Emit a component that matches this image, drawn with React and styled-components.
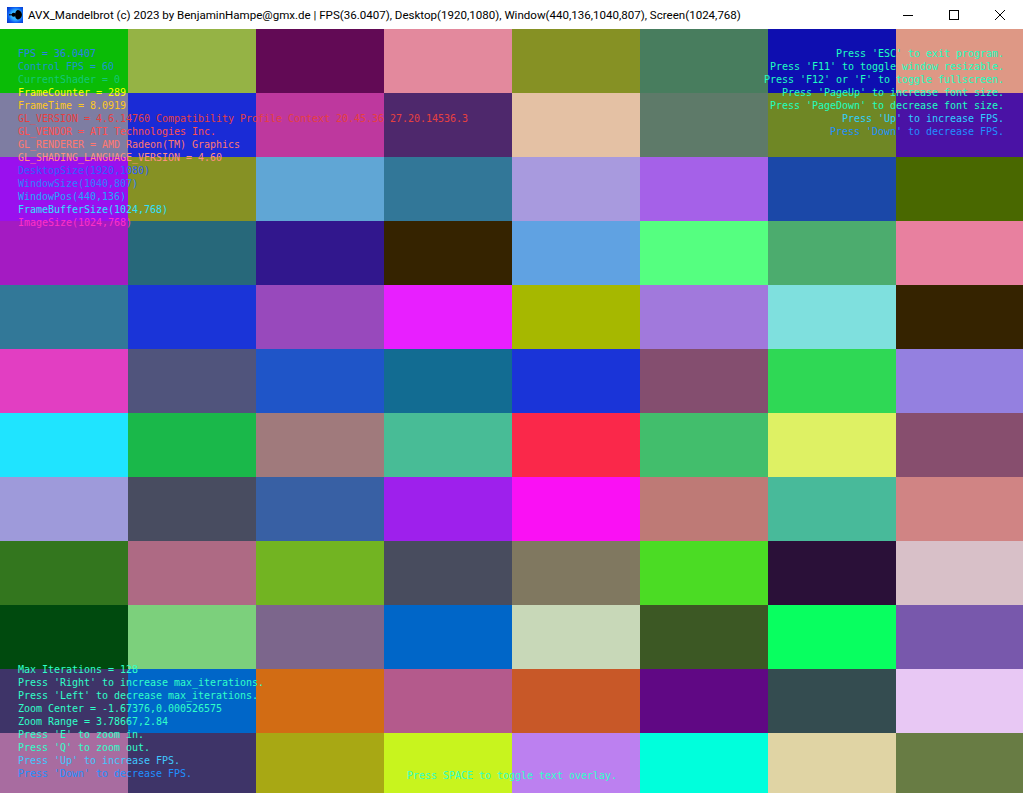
import React from 'react';
import styled, { createGlobalStyle } from 'styled-components';

const GlobalStyle = createGlobalStyle`
  html, body {
    margin: 0;
    padding: 0;
    height: 100%;
    overflow: hidden;
    background: #fff;
  }
`;

const Window = styled.div`
  display: flex;
  flex-direction: column;
  width: 1023px;
  height: 793px;
  overflow: hidden;
`;

const TitleBar = styled.header`
  display: flex;
  align-items: center;
  flex: 0 0 29px;
  height: 29px;
  background: #fff;
  color: #000;
  font-family: Roboto, 'Noto Sans', sans-serif;
  font-size: 11.55px;
  white-space: nowrap;
`;

const AppIcon = styled.svg`
  flex: none;
  width: 16px;
  height: 16px;
  margin: 0 5px 0 7px;
`;

const Title = styled.span`
  flex: 1;
`;

const CaptionButton = styled.div`
  display: flex;
  align-items: center;
  justify-content: center;
  width: 46px;
  height: 29px;

  svg {
    display: block;
    width: 10px;
    height: 10px;
  }
`;

const Canvas = styled.main`
  position: relative;
  flex: none;
  width: 1024px;
  height: 768px;
  font-family: 'DejaVu Sans Mono', 'Liberation Mono', monospace;
  font-size: 10px;
  letter-spacing: -0.02px;
  line-height: 13px;
  white-space: pre;
`;

const TileGrid = styled.div`
  display: grid;
  grid-template-columns: repeat(8, 128px);
  grid-auto-rows: 64px;
`;

const Tile = styled.div`
  background: ${(p) => p.$color};
`;

const Overlay = styled.div`
  position: absolute;
  display: flex;
  flex-direction: column;
  ${(p) => p.$top && 'top: 18px;'}
  ${(p) => p.$bottom && `bottom: ${p.$bottom}px;`}
  ${(p) => p.$left && 'left: 18px;'}
  ${(p) => p.$right && 'right: 20px; align-items: flex-end;'}
  ${(p) => p.$center && 'left: 0; right: 0; align-items: center;'}
`;

const Line = styled.div`
  color: ${(p) => p.$color};
`;

const TILES = [
  '#0abc06', '#95b345', '#620a55', '#e3899d', '#869124', '#487d5e', '#0e0eb0', '#de9885',
  '#7e7da2', '#1a2bd6', '#be389e', '#4e286c', '#e4c1a4', '#5e7a69', '#6f8725', '#4a12a5',
  '#9a10ee', '#869124', '#60a6d5', '#327798', '#a89ade', '#a561e8', '#1b48a8', '#496800',
  '#a41bc2', '#27687a', '#31178d', '#352300', '#60a2e2', '#55ff80', '#4cac6e', '#e8809f',
  '#327898', '#1a34d8', '#9849bc', '#e81fff', '#a6b800', '#a179dc', '#7fe0de', '#352300',
  '#e23ec2', '#50547c', '#1f55c8', '#126c92', '#1a34d8', '#844e6f', '#2fd855', '#9480e0',
  '#1fe4ff', '#1ab84a', '#a07a7c', '#48bc96', '#fa284a', '#42be6c', '#def164', '#874e6e',
  '#9e9ada', '#484c60', '#3860a4', '#9e20ec', '#fa10f4', '#be7a76', '#48ba9a', '#d08484',
  '#33761e', '#ae6a84', '#72b422', '#484c5e', '#807860', '#4bdc24', '#2a1038', '#d8c0c8',
  '#004a0e', '#7cd07c', '#7c668c', '#0066c8', '#c8d8b8', '#3c5824', '#08ff60', '#7858ac',
  '#3e3468', '#0066c8', '#d26c14', '#b45a8c', '#c85828', '#600884', '#344c50', '#e8c8f4',
  '#a86ca0', '#3e3468', '#a8a814', '#c8f41e', '#bc80f0', '#00ffdc', '#e0d4a4', '#687c44',
];

const STATS = [
  ['FPS = 36.0407', '#2a80e8'],
  ['Control FPS = 60', '#1a96d0'],
  ['CurrentShader = 0', '#10c878'],
  ['FrameCounter = 289', '#ffff00'],
  ['FrameTime = 8.0919', '#ffc81e'],
  ['GL_VERSION = 4.6.14760 Compatibility Profile Context 20.45.36 27.20.14536.3', '#e64040'],
  ['GL_VENDOR = ATI Technologies Inc.', '#ff5050'],
  ['GL_RENDERER = AMD Radeon(TM) Graphics', '#ff7870'],
  ['GL_SHADING_LANGUAGE_VERSION = 4.60', '#ff9080'],
  ['DesktopSize(1920,1080)', '#2e60ff'],
  ['WindowSize(1040,807)', '#2e80ff'],
  ['WindowPos(440,136)', '#20a8ff'],
  ['FrameBufferSize(1024,768)', '#30e0ff'],
  ['ImageSize(1024,768)', '#ff30c8'],
];

const HELP = [
  ["Press 'ESC' to exit program.", '#20ffc0'],
  ["Press 'F11' to toggle window resizable.", '#20ffc0'],
  ["Press 'F12' or 'F' to toggle fullscreen.", '#20ffc0'],
  ["Press 'PageUp' to increase font size.", '#20ffc0'],
  ["Press 'PageDown' to decrease font size.", '#20ffc0'],
  ["Press 'Up' to increase FPS.", '#30d0ff'],
  ["Press 'Down' to decrease FPS.", '#2090ff'],
];

const ZOOM_HELP = [
  ['Max Iterations = 128', '#30ffc8'],
  ["Press 'Right' to increase max_iterations.", '#30ffc8'],
  ["Press 'Left' to decrease max_iterations.", '#30ffc8'],
  ['Zoom Center = -1.67376,0.000526575', '#30ffc8'],
  ['Zoom Range = 3.78667,2.84', '#30ffc8'],
  ["Press 'E' to zoom in.", '#30ffc8'],
  ["Press 'Q' to zoom out.", '#30ffc8'],
  ["Press 'Up' to increase FPS.", '#40c8ff'],
  ["Press 'Down' to decrease FPS.", '#2090ff'],
];

function Lines({ items }) {
  return items.map(([text, color]) => (
    <Line key={text} $color={color}>
      {text}
    </Line>
  ));
}

export default function App() {
  return (
    <Window>
      <GlobalStyle />
      <TitleBar>
        <AppIcon viewBox="0 0 16 16">
          <defs>
            <radialGradient id="iconGlow" cx="0.55" cy="0.5" r="0.7">
              <stop offset="0.4" stopColor="#35b4ff" />
              <stop offset="0.7" stopColor="#0a5cf0" />
              <stop offset="1" stopColor="#0636c8" />
            </radialGradient>
          </defs>
          <rect width="16" height="16" fill="url(#iconGlow)" />
          <path d="M2 7.3h4v1H2z" fill="#000" />
          <circle cx="6.6" cy="7.8" r="2" fill="#000" />
          <path
            d="M8 7.8 C8 5 9.5 3.2 10.5 3 C12.5 3 14.8 5 15 7.8 C14.8 10.6 12.5 12.6 10.5 12.6 C9.5 12.4 8 10.6 8 7.8 Z"
            fill="#000"
          />
        </AppIcon>
        <Title>
          AVX_Mandelbrot (c) 2023 by BenjaminHampe@gmx.de | FPS(36.0407), Desktop(1920,1080), Window(440,136,1040,807), Screen(1024,768)
        </Title>
        <CaptionButton>
          <svg viewBox="0 0 10 10"><path d="M0 5.5H10" stroke="#000" fill="none" /></svg>
        </CaptionButton>
        <CaptionButton>
          <svg viewBox="0 0 10 10"><rect x="0.5" y="0.5" width="9" height="9" stroke="#000" fill="none" /></svg>
        </CaptionButton>
        <CaptionButton>
          <svg viewBox="0 0 10 10"><path d="M0 0L10 10M10 0L0 10" stroke="#000" fill="none" /></svg>
        </CaptionButton>
      </TitleBar>
      <Canvas>
        <TileGrid>
          {TILES.map((color, i) => (
            <Tile key={i} $color={color} />
          ))}
        </TileGrid>
        <Overlay $top $left><Lines items={STATS} /></Overlay>
        <Overlay $top $right><Lines items={HELP} /></Overlay>
        <Overlay $bottom={17} $left><Lines items={ZOOM_HELP} /></Overlay>
        <Overlay $bottom={15} $center>
          <Line $color="#30ffc8">Press SPACE to toggle text overlay.</Line>
        </Overlay>
      </Canvas>
    </Window>
  );
}
